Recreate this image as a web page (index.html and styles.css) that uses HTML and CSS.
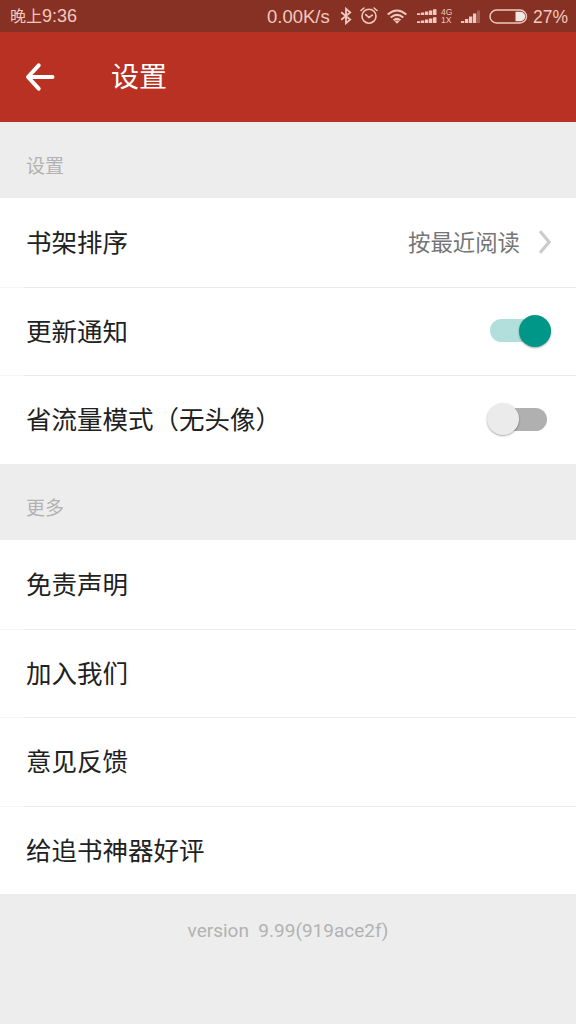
FILE: index.html
```html
<!DOCTYPE html>
<html lang="zh-CN">
<head>
<meta charset="utf-8">
<title>设置</title>
<link rel="stylesheet" href="styles.css">
</head>
<body>
<div class="status">
  <span class="time"><span class="time-cjk">晚上</span>9:36</span>
  <span class="speed">0.00K/s</span>
  <svg class="bluetooth" width="12" height="18" viewBox="0 0 12 18"><path d="M1.2 5.2l9 7.4-4.2 3.6V1.8l4.2 3.6-9 7.4" fill="none" stroke="currentColor" stroke-width="1.8"/></svg>
  <svg class="alarm" width="18" height="18" viewBox="0 0 18 18" fill="none" stroke="currentColor" stroke-width="1.6" stroke-linecap="round"><circle cx="9" cy="9.2" r="7"/><path d="M1 3.5L4 1M17 3.5L14 1M5.7 7.7L9 10.5l3.3-2.4"/></svg>
  <svg class="wifi" width="20" height="15" viewBox="0 0 20 15" fill="none" stroke="currentColor" stroke-width="2"><path d="M.7 5.5Q10-2.5 19.3 5.5M3.7 8.6Q10 3.2 16.3 8.6M6.6 11.3Q10 8.5 13.4 11.3"/><path d="M7.6 12.3Q10 10.5 12.4 12.3L10 14.8z" fill="currentColor" stroke="none"/></svg>
  <svg class="dual" width="20" height="15" viewBox="0 0 20 15" fill="currentColor"><path d="M0 4.3h3.3V6H0zM4 3.5h3.3V6H4zM8 2.5h3.3V6H8zM12 1.4h3.3V6H12zM16 .3h3.5V6H16zM0 12.3h3.3V14H0zM4 11.5h3.3V14H4zM8 10.5h3.3V14H8zM12 9.4h3.3V14H12zM16 8.3h3.5V14H16z"/></svg>
  <span class="network"><span>4G</span><span>1X</span></span>
  <svg class="signal" width="20" height="14" viewBox="0 0 20 14" fill="currentColor"><path d="M0 12h3.3v2H0zM4 10h3.3v4H4zM8 7.5h3.3V14H8zM12 4.5h3.3V14H12z"/><path d="M16 1.5h3V14h-3z" opacity=".3"/></svg>
  <svg class="battery" width="39" height="15" viewBox="0 0 39 15"><rect x="1" y="1" width="36.5" height="13" rx="6.5" fill="none" stroke="currentColor" stroke-width="1.4"/><path d="M26.5 2.8h5a4.7 4.7 0 010 9.4h-5z" fill="#f3e7e4"/></svg>
  <span class="percent">27%</span>
</div>
<header class="appbar">
  <svg width="30" height="30" viewBox="0 0 30 30" fill="none" stroke="#fff" stroke-width="4" stroke-linecap="round" stroke-linejoin="round"><path d="M13.7 3.3L3 15l10.7 11.7M3.5 15h24"/></svg>
  <h1>设置</h1>
</header>
<main>
  <h2 class="section first">设置</h2>
  <ul class="group">
    <li class="row"><span class="label">书架排序</span><span class="value">按最近阅读</span><svg class="chevron" width="14" height="26" viewBox="0 0 14 26"><path d="M2 2.2L11.2 13 2 23.8" fill="none" stroke="#ccc" stroke-width="3.2"/></svg></li>
    <li class="row"><span class="label">更新通知</span><span class="switch on"><span class="thumb"></span></span></li>
    <li class="row"><span class="label">省流量模式（无头像）</span><span class="switch"><span class="thumb"></span></span></li>
  </ul>
  <h2 class="section">更多</h2>
  <ul class="group">
    <li class="row"><span class="label">免责声明</span></li>
    <li class="row"><span class="label">加入我们</span></li>
    <li class="row"><span class="label">意见反馈</span></li>
    <li class="row"><span class="label">给追书神器好评</span></li>
  </ul>
  <p class="version">version&nbsp; 9.99(919ace2f)</p>
</main>
</body>
</html>
```
FILE: styles.css
```css
* { box-sizing: border-box; }
body {
  margin: 0;
  height: 1024px;
  overflow: hidden;
  background: #ededed;
  color: #212121;
  font-family: Roboto, "Noto Sans CJK SC", sans-serif;
}
h1, h2, p, ul { margin: 0; padding: 0; font-weight: 400; }
svg { display: block; flex: none; }
.status {
  height: 32px;
  display: flex;
  align-items: center;
  padding: 0 8px 0 10px;
  background: #863123;
  color: #efc9c0;
  font: 18px/32px "Liberation Sans", "Noto Sans CJK SC", sans-serif;
  white-space: nowrap;
}
.time { flex: 1; padding-top: 1px; }
.time-cjk { font-size: 16px; }
.speed { width: 64px; padding-top: 1px; font-size: 18.5px; }
.bluetooth { margin-left: 9px; }
.alarm { margin-left: 8px; }
.wifi { margin-left: 9px; }
.dual { margin-left: 10px; }
.network {
  display: flex;
  flex-direction: column;
  width: 12px;
  margin-left: 4px;
  font-size: 8.5px;
  line-height: 8px;
}
.signal { margin-left: 8px; }
.battery { margin-left: 8px; }
.percent { width: 35px; padding-top: 1px; margin-left: 5px; font-size: 17.5px; }
.appbar {
  height: 90px;
  display: flex;
  align-items: center;
  gap: 56px;
  padding-left: 25px;
  background: #b83122;
  color: #fff;
}
.appbar h1 { padding-top: 1px; font-size: 28px; line-height: 40px; }
.section {
  height: 76.5px;
  padding: 12px 26px 0;
  color: #b2b2b2;
  font-size: 19px;
  line-height: 66px;
}
.section.first { height: 76px; }
.group { background: #fff; list-style: none; }
.row {
  height: 88.5px;
  display: flex;
  align-items: center;
  padding: 0 25px 0 26px;
}
.row + .row {
  background: linear-gradient(#e9e9e9, #e9e9e9) 24px 0 / 100% 1px no-repeat,
              linear-gradient(#f6f6f6, #f6f6f6) 0 0 / 24px 1px no-repeat;
}
.label { flex: 1; padding-bottom: 3px; font-size: 25.5px; }
.value { padding-bottom: 3px; margin-right: 18px; color: #757575; font-size: 22.4px; }
.chevron { margin-right: -1px; }
.switch {
  display: flex;
  align-items: center;
  width: 57px;
  height: 23px;
  margin-right: 4px;
  border-radius: 12px;
  background: #b0b0b0;
}
.thumb {
  width: 32px;
  height: 32px;
  flex: none;
  margin-left: -3px;
  border-radius: 50%;
  background: #ebebeb;
  box-shadow: 0 1px 2px rgba(0, 0, 0, .35);
}
.switch.on { justify-content: flex-end; background: #b2dfdb; }
.on .thumb { margin: 0 -4px 0 0; background: #009688; }
.version {
  padding-top: 22px;
  color: #b2b2b2;
  font-size: 19px;
  line-height: 30px;
  text-align: center;
}
```
